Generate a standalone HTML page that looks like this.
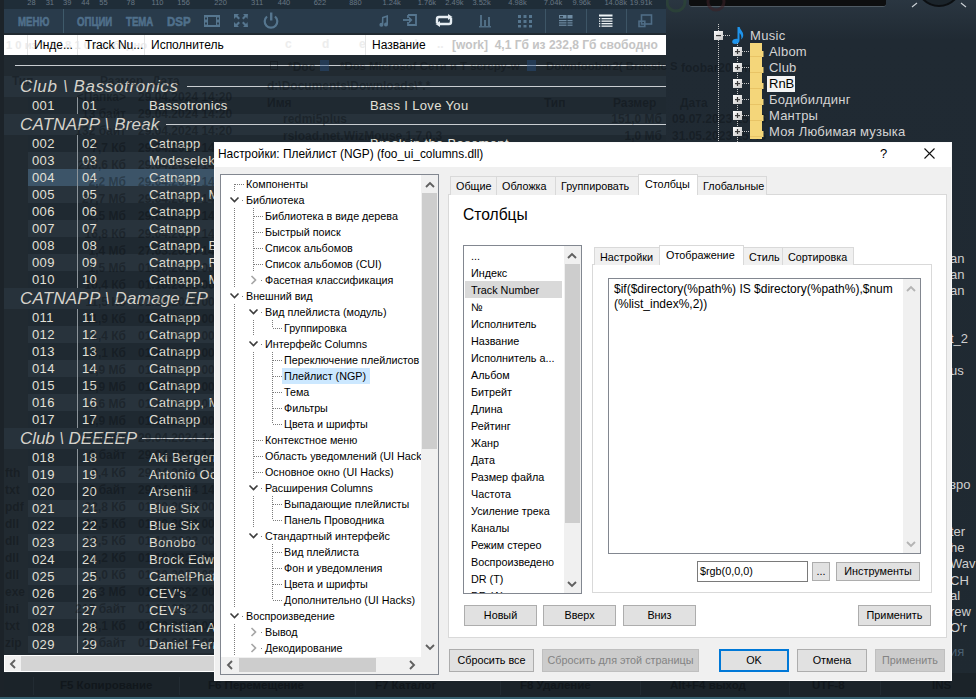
<!DOCTYPE html><html><head><meta charset="utf-8"><style>
*{box-sizing:border-box}
body{margin:0;width:976px;height:699px;overflow:hidden;background:#212a31;position:relative;font-family:"Liberation Sans",sans-serif}
.ab{position:absolute}
.t{position:absolute;white-space:pre;line-height:1}
.pl{font-size:13px;letter-spacing:0.35px;color:#e2e0d8}
.gh{font-size:17px;font-style:italic;color:#d6d3cb}
.dlg{font-size:10.8px;color:#000}
.btn{position:absolute;background:#e1e1e1;border:1px solid #adadad;font-size:10.8px;text-align:center;color:#000}
.tri{font-size:10.75px;color:#000}
</style></head><body>

<div class="ab" style="left:0;top:0;width:4px;height:699px;background:#1c2329"></div>
<div class="ab" style="left:4px;top:0;width:662px;height:9px;background:#1f2d38"></div>
<div class="t" style="left:1.3999999999999986px;width:60px;text-align:center;top:-1px;font-size:7.5px;color:#687784">28</div>
<div class="t" style="left:19.799999999999997px;width:60px;text-align:center;top:-1px;font-size:7.5px;color:#687784">31</div>
<div class="t" style="left:37.2px;width:60px;text-align:center;top:-1px;font-size:7.5px;color:#687784">39</div>
<div class="t" style="left:55.400000000000006px;width:60px;text-align:center;top:-1px;font-size:7.5px;color:#687784">44</div>
<div class="t" style="left:73.5px;width:60px;text-align:center;top:-1px;font-size:7.5px;color:#687784">55</div>
<div class="t" style="left:100.69999999999999px;width:60px;text-align:center;top:-1px;font-size:7.5px;color:#687784">78</div>
<div class="t" style="left:127.5px;width:60px;text-align:center;top:-1px;font-size:7.5px;color:#687784">110</div>
<div class="t" style="left:153.6px;width:60px;text-align:center;top:-1px;font-size:7.5px;color:#687784">156</div>
<div class="t" style="left:190.6px;width:60px;text-align:center;top:-1px;font-size:7.5px;color:#687784">220</div>
<div class="t" style="left:227.10000000000002px;width:60px;text-align:center;top:-1px;font-size:7.5px;color:#687784">311</div>
<div class="t" style="left:254px;width:60px;text-align:center;top:-1px;font-size:7.5px;color:#687784">440</div>
<div class="t" style="left:289.9px;width:60px;text-align:center;top:-1px;font-size:7.5px;color:#687784">622</div>
<div class="t" style="left:325.4px;width:60px;text-align:center;top:-1px;font-size:7.5px;color:#687784">880</div>
<div class="t" style="left:361.7px;width:60px;text-align:center;top:-1px;font-size:7.5px;color:#687784">1.24k</div>
<div class="t" style="left:396.9px;width:60px;text-align:center;top:-1px;font-size:7.5px;color:#687784">1.76k</div>
<div class="t" style="left:424.4px;width:60px;text-align:center;top:-1px;font-size:7.5px;color:#687784">2.49k</div>
<div class="t" style="left:451.6px;width:60px;text-align:center;top:-1px;font-size:7.5px;color:#687784">3.52k</div>
<div class="t" style="left:487.5px;width:60px;text-align:center;top:-1px;font-size:7.5px;color:#687784">4.98k</div>
<div class="t" style="left:523px;width:60px;text-align:center;top:-1px;font-size:7.5px;color:#687784">7.04k</div>
<div class="t" style="left:551.6px;width:60px;text-align:center;top:-1px;font-size:7.5px;color:#687784">9.96k</div>
<div class="t" style="left:585.7px;width:60px;text-align:center;top:-1px;font-size:7.5px;color:#687784">14.08k</div>
<div class="t" style="left:611.1px;width:60px;text-align:center;top:-1px;font-size:7.5px;color:#687784">19.91k</div>
<div class="ab" style="left:4px;top:9px;width:662px;height:24px;background:#293b4b"></div>
<div class="ab" style="left:63px;top:9px;width:1px;height:24px;background:#3f5a6a"></div>
<div class="t" style="left:18px;top:15px;font-size:13px;font-weight:bold;color:#50708b;-webkit-text-stroke:0.6px #50708b;transform-origin:0 0;transform:scaleX(0.74)">МЕНЮ</div>
<div class="t" style="left:77px;top:15px;font-size:13px;font-weight:bold;color:#50708b;-webkit-text-stroke:0.6px #50708b;transform-origin:0 0;transform:scaleX(0.74)">ОПЦИИ</div>
<div class="t" style="left:126px;top:15px;font-size:13px;font-weight:bold;color:#50708b;-webkit-text-stroke:0.6px #50708b;transform-origin:0 0;transform:scaleX(0.74)">ТЕМА</div>
<div class="t" style="left:167px;top:15px;font-size:13px;font-weight:bold;color:#50708b;-webkit-text-stroke:0.6px #50708b;transform-origin:0 0;transform:scaleX(0.88)">DSP</div>
<svg class="ab" style="left:0;top:0" width="666" height="34">
<g fill="none" stroke="#56768f" stroke-width="2">
<rect x="205" y="16" width="14" height="10"/>
</g>
<g fill="#56768f">
<rect x="204" y="15" width="4" height="12"/><rect x="216" y="15" width="4" height="12"/>
</g>
<g fill="#2a3c4c"><rect x="205" y="17.5" width="2" height="2"/><rect x="205" y="22.5" width="2" height="2"/><rect x="217" y="17.5" width="2" height="2"/><rect x="217" y="22.5" width="2" height="2"/></g>
<g fill="#56768f">
<path d="M234 14h5l-1.5 1.5 2.5 2.5-1.5 1.5-2.5-2.5-2 2z"/>
<path d="M248 14h-5l1.5 1.5-2.5 2.5 1.5 1.5 2.5-2.5 1.5 2z"/>
<path d="M234 27h5l-1.5-1.5 2.5-2.5-1.5-1.5-2.5 2.5-2-2z"/>
<path d="M248 27h-5l1.5-1.5-2.5-2.5 1.5-1.5 2.5 2.5 1.5-2z"/>
</g>
<path d="M267 16.5a6.3 6.3 0 1 0 8 0" fill="none" stroke="#56768f" stroke-width="2.2"/>
<rect x="270" y="12.5" width="2.4" height="8" fill="#56768f"/>
<g fill="#56768f">
<path d="M382 17l6-2v9.5a2 2 0 1 1-1.6-1.9v-5.3l-3 1v6.5a2 2 0 1 1-1.6-1.9z"/>
</g>
<g fill="none" stroke="#56768f" stroke-width="1.8">
<path d="M408 15h8v10h-8v-3"/><path d="M408 18v-3"/>
</g>
<path d="M403 20h7" stroke="#56768f" stroke-width="1.8"/><path d="M409 16.5l3.5 3.5-3.5 3.5z" fill="#56768f"/>
<g fill="none" stroke="#e6edf2" stroke-width="2.4">
<path d="M437 23v-4a2 2 0 0 1 2-2h10"/><path d="M451 18v4a2 2 0 0 1-2 2h-10"/>
</g>
<path d="M448 14l4.5 3-4.5 3z" fill="#e6edf2"/><path d="M440 21l-4.5 3 4.5 3z" fill="#e6edf2"/>
<g fill="#56768f" opacity="0.85">
<rect x="480" y="15" width="2" height="12"/><rect x="484" y="20" width="2" height="7"/><rect x="488" y="17" width="2" height="10"/><rect x="479" y="26" width="12" height="1.5"/>
</g>
<g fill="#56768f">
<rect x="518" y="15" width="3" height="3"/><rect x="523.5" y="15" width="3" height="3"/><rect x="529" y="15" width="3" height="3"/>
<rect x="518" y="20" width="3" height="3"/><rect x="523.5" y="20" width="3" height="3"/><rect x="529" y="20" width="3" height="3"/>
<rect x="518" y="25" width="3" height="2.5"/><rect x="523.5" y="25" width="3" height="2.5"/><rect x="529" y="25" width="3" height="2.5"/>
</g>
<g fill="#6f8ca3">
<rect x="559" y="15" width="7.5" height="3.5"/><rect x="567.5" y="15" width="5" height="3.5"/>
<rect x="559" y="20" width="7.5" height="1.2"/><rect x="567.5" y="20" width="5" height="1.2"/>
<rect x="559" y="22.3" width="7.5" height="1.2"/><rect x="567.5" y="22.3" width="5" height="1.2"/>
<rect x="559" y="24.6" width="7.5" height="1.2"/><rect x="567.5" y="24.6" width="5" height="1.2"/>
</g>
<rect x="560" y="16" width="3" height="1.5" fill="#2a3c4c"/>
<g fill="#eef3f6">
<rect x="599" y="14.5" width="13.5" height="2"/>
<rect x="599" y="18" width="1.3" height="1.3"/><rect x="601.5" y="18" width="11" height="1.3"/>
<rect x="599" y="20.5" width="1.3" height="1.3"/><rect x="601.5" y="20.5" width="11" height="1.3"/>
<rect x="599" y="23" width="1.3" height="1.3"/><rect x="601.5" y="23" width="11" height="1.3"/>
<rect x="599" y="25.5" width="1.3" height="1.3"/><rect x="601.5" y="25.5" width="11" height="1.3"/>
</g>
<g fill="none" stroke="#4f6d86" stroke-width="1.6">
<rect x="641.5" y="15" width="10" height="9"/><rect x="639" y="21.2" width="5.8" height="5.3"/>
</g>
<g fill="#3d5566"><rect x="545" y="9" width="1" height="24"/><rect x="586" y="9" width="1" height="24"/><rect x="626" y="9" width="1" height="24"/></g>
</svg>
<div class="ab" style="left:666px;top:0;width:310px;height:699px;background:linear-gradient(#2a3641 0px,#202a33 40px,#1f2931 100%)"></div>
<div class="ab" style="left:689px;top:0;width:197px;height:7px;background:#0d0e0f;border-bottom:1px solid #4f5a63;border-radius:0 0 3px 3px"></div>
<svg class="ab" style="left:900px;top:0" width="76" height="20"><circle cx="39" cy="-16" r="22" fill="#1b242b" stroke="#0c0f12" stroke-width="2"/><path d="M17 3l-5 4M61 3l5 4" stroke="#c9cfd4" stroke-width="1.2"/></svg>
<svg class="ab" style="left:666px;top:0" width="60" height="20"><circle cx="10" cy="2" r="9" fill="none" stroke="#2d4a36" stroke-width="3" opacity="0.6"/><circle cx="50" cy="2" r="8" fill="none" stroke="#3a2226" stroke-width="3" opacity="0.6"/></svg>
<div class="ab" style="left:4px;top:35px;width:662px;height:20px;background:#fff"></div>
<div class="t" style="left:452px;top:39px;font-size:12px;font-weight:bold;color:#c4c4c4">[work]  4,1 Гб из 232,8 Гб свободно</div>
<div class="t" style="left:6px;top:40px;font-size:11.2px;font-weight:bold;color:#ebebeb">1 0 из 1 3 / 8 1 0 свободно</div>
<div class="t" style="left:285px;top:38px;font-size:12px;font-weight:bold;color:#ededed">c</div>
<div class="t" style="left:322px;top:38px;font-size:12px;font-weight:bold;color:#ededed">d</div>
<div class="t" style="left:359px;top:38px;font-size:12px;font-weight:bold;color:#ededed">e</div>
<div class="t" style="left:400px;top:38px;font-size:12px;font-weight:bold;color:#ededed">\</div>
<div class="t" style="left:415px;top:38px;font-size:12px;font-weight:bold;color:#ededed">\</div>
<div class="t" style="left:437px;top:38px;font-size:12px;font-weight:bold;color:#ededed">..</div>
<div class="ab" style="left:27px;top:35px;width:1px;height:20px;background:#e5e5e5"></div>
<div class="ab" style="left:77px;top:35px;width:1px;height:20px;background:#e5e5e5"></div>
<div class="ab" style="left:144px;top:35px;width:1px;height:20px;background:#e5e5e5"></div>
<div class="ab" style="left:365px;top:35px;width:1px;height:20px;background:#e5e5e5"></div>
<div class="t" style="left:34px;top:39px;font-size:12px;color:#000">Инде...</div>
<div class="t" style="left:85px;top:39px;font-size:12px;color:#000">Track Nu...</div>
<div class="t" style="left:151px;top:39px;font-size:12px;color:#000">Исполнитель</div>
<div class="t" style="left:372px;top:39px;font-size:12px;color:#000">Название</div>
<div class="ab" style="left:15px;top:65px;width:651px;height:1px;background:#c9cdd1"></div>
<div class="ab" style="left:4px;top:76px;width:662px;height:21px;background:#27323b"></div>
<div class="t gh" style="left:20px;top:78px;letter-spacing:0.64px">Club \ Bassotronics</div>
<div class="ab" style="left:187px;top:86px;width:479px;height:1px;background:#c9cdd1"></div>
<div class="ab" style="left:28px;top:97px;width:638px;height:17px;background:#1f2931"></div>
<div class="ab" style="left:77px;top:97px;width:1px;height:17px;background:#8b9399"></div>
<div class="t pl" style="left:32px;top:99px">001</div>
<div class="t pl" style="left:82px;top:99px">01</div>
<div class="t pl" style="left:149px;top:99px">Bassotronics</div>
<div class="t pl" style="left:370px;top:99px">Bass I Love You</div>
<div class="ab" style="left:4px;top:114px;width:662px;height:21px;background:#27323b"></div>
<div class="t gh" style="left:20px;top:116px;letter-spacing:0.17px">CATNAPP \ Break</div>
<div class="ab" style="left:166px;top:124px;width:500px;height:1px;background:#c9cdd1"></div>
<div class="ab" style="left:28px;top:135px;width:638px;height:17px;background:#1f2931"></div>
<div class="ab" style="left:77px;top:135px;width:1px;height:17px;background:#8b9399"></div>
<div class="t pl" style="left:32px;top:137px">002</div>
<div class="t pl" style="left:82px;top:137px">02</div>
<div class="t pl" style="left:149px;top:137px">Catnapp</div>
<div class="t pl" style="left:370px;top:137px">Break in the Basement</div>
<div class="ab" style="left:28px;top:152px;width:638px;height:17px;background:#28333c"></div>
<div class="ab" style="left:77px;top:152px;width:1px;height:17px;background:#8b9399"></div>
<div class="t pl" style="left:32px;top:154px">003</div>
<div class="t pl" style="left:82px;top:154px">03</div>
<div class="t pl" style="left:149px;top:154px">Modeselektor</div>
<div class="ab" style="left:28px;top:169px;width:638px;height:17px;background:#3c5468"></div>
<div class="ab" style="left:77px;top:169px;width:1px;height:17px;background:#8b9399"></div>
<div class="t pl" style="left:32px;top:171px">004</div>
<div class="t pl" style="left:82px;top:171px">04</div>
<div class="t pl" style="left:149px;top:171px">Catnapp</div>
<div class="ab" style="left:28px;top:186px;width:638px;height:17px;background:#28333c"></div>
<div class="ab" style="left:77px;top:186px;width:1px;height:17px;background:#8b9399"></div>
<div class="t pl" style="left:32px;top:188px">005</div>
<div class="t pl" style="left:82px;top:188px">05</div>
<div class="t pl" style="left:149px;top:188px">Catnapp, M</div>
<div class="ab" style="left:28px;top:203px;width:638px;height:17px;background:#1f2931"></div>
<div class="ab" style="left:77px;top:203px;width:1px;height:17px;background:#8b9399"></div>
<div class="t pl" style="left:32px;top:205px">006</div>
<div class="t pl" style="left:82px;top:205px">06</div>
<div class="t pl" style="left:149px;top:205px">Catnapp</div>
<div class="ab" style="left:28px;top:220px;width:638px;height:17px;background:#28333c"></div>
<div class="ab" style="left:77px;top:220px;width:1px;height:17px;background:#8b9399"></div>
<div class="t pl" style="left:32px;top:222px">007</div>
<div class="t pl" style="left:82px;top:222px">07</div>
<div class="t pl" style="left:149px;top:222px">Catnapp</div>
<div class="ab" style="left:28px;top:237px;width:638px;height:17px;background:#1f2931"></div>
<div class="ab" style="left:77px;top:237px;width:1px;height:17px;background:#8b9399"></div>
<div class="t pl" style="left:32px;top:239px">008</div>
<div class="t pl" style="left:82px;top:239px">08</div>
<div class="t pl" style="left:149px;top:239px">Catnapp, B</div>
<div class="ab" style="left:28px;top:254px;width:638px;height:17px;background:#28333c"></div>
<div class="ab" style="left:77px;top:254px;width:1px;height:17px;background:#8b9399"></div>
<div class="t pl" style="left:32px;top:256px">009</div>
<div class="t pl" style="left:82px;top:256px">09</div>
<div class="t pl" style="left:149px;top:256px">Catnapp, R</div>
<div class="ab" style="left:28px;top:271px;width:638px;height:17px;background:#1f2931"></div>
<div class="ab" style="left:77px;top:271px;width:1px;height:17px;background:#8b9399"></div>
<div class="t pl" style="left:32px;top:273px">010</div>
<div class="t pl" style="left:82px;top:273px">10</div>
<div class="t pl" style="left:149px;top:273px">Catnapp, M</div>
<div class="ab" style="left:4px;top:288px;width:662px;height:21px;background:#27323b"></div>
<div class="t gh" style="left:20px;top:290px;letter-spacing:0.2px">CATNAPP \ Damage EP</div>
<div class="ab" style="left:216px;top:298px;width:450px;height:1px;background:#c9cdd1"></div>
<div class="ab" style="left:28px;top:309px;width:638px;height:17px;background:#1f2931"></div>
<div class="ab" style="left:77px;top:309px;width:1px;height:17px;background:#8b9399"></div>
<div class="t pl" style="left:32px;top:311px">011</div>
<div class="t pl" style="left:82px;top:311px">11</div>
<div class="t pl" style="left:149px;top:311px">Catnapp</div>
<div class="ab" style="left:28px;top:326px;width:638px;height:17px;background:#28333c"></div>
<div class="ab" style="left:77px;top:326px;width:1px;height:17px;background:#8b9399"></div>
<div class="t pl" style="left:32px;top:328px">012</div>
<div class="t pl" style="left:82px;top:328px">12</div>
<div class="t pl" style="left:149px;top:328px">Catnapp</div>
<div class="ab" style="left:28px;top:343px;width:638px;height:17px;background:#1f2931"></div>
<div class="ab" style="left:77px;top:343px;width:1px;height:17px;background:#8b9399"></div>
<div class="t pl" style="left:32px;top:345px">013</div>
<div class="t pl" style="left:82px;top:345px">13</div>
<div class="t pl" style="left:149px;top:345px">Catnapp</div>
<div class="ab" style="left:28px;top:360px;width:638px;height:17px;background:#28333c"></div>
<div class="ab" style="left:77px;top:360px;width:1px;height:17px;background:#8b9399"></div>
<div class="t pl" style="left:32px;top:362px">014</div>
<div class="t pl" style="left:82px;top:362px">14</div>
<div class="t pl" style="left:149px;top:362px">Catnapp</div>
<div class="ab" style="left:28px;top:377px;width:638px;height:17px;background:#1f2931"></div>
<div class="ab" style="left:77px;top:377px;width:1px;height:17px;background:#8b9399"></div>
<div class="t pl" style="left:32px;top:379px">015</div>
<div class="t pl" style="left:82px;top:379px">15</div>
<div class="t pl" style="left:149px;top:379px">Catnapp</div>
<div class="ab" style="left:28px;top:394px;width:638px;height:17px;background:#28333c"></div>
<div class="ab" style="left:77px;top:394px;width:1px;height:17px;background:#8b9399"></div>
<div class="t pl" style="left:32px;top:396px">016</div>
<div class="t pl" style="left:82px;top:396px">16</div>
<div class="t pl" style="left:149px;top:396px">Catnapp, M</div>
<div class="ab" style="left:28px;top:411px;width:638px;height:17px;background:#1f2931"></div>
<div class="ab" style="left:77px;top:411px;width:1px;height:17px;background:#8b9399"></div>
<div class="t pl" style="left:32px;top:413px">017</div>
<div class="t pl" style="left:82px;top:413px">17</div>
<div class="t pl" style="left:149px;top:413px">Catnapp</div>
<div class="ab" style="left:4px;top:428px;width:662px;height:21px;background:#27323b"></div>
<div class="t gh" style="left:20px;top:430px;letter-spacing:-0.08px">Club \ DEEEEP</div>
<div class="ab" style="left:142px;top:438px;width:524px;height:1px;background:#c9cdd1"></div>
<div class="ab" style="left:28px;top:449px;width:638px;height:17px;background:#1f2931"></div>
<div class="ab" style="left:77px;top:449px;width:1px;height:17px;background:#8b9399"></div>
<div class="t pl" style="left:32px;top:451px">018</div>
<div class="t pl" style="left:82px;top:451px">18</div>
<div class="t pl" style="left:149px;top:451px">Aki Bergen</div>
<div class="ab" style="left:28px;top:466px;width:638px;height:17px;background:#28333c"></div>
<div class="ab" style="left:77px;top:466px;width:1px;height:17px;background:#8b9399"></div>
<div class="t pl" style="left:32px;top:468px">019</div>
<div class="t pl" style="left:82px;top:468px">19</div>
<div class="t pl" style="left:149px;top:468px">Antonio Ocasio</div>
<div class="ab" style="left:28px;top:483px;width:638px;height:17px;background:#1f2931"></div>
<div class="ab" style="left:77px;top:483px;width:1px;height:17px;background:#8b9399"></div>
<div class="t pl" style="left:32px;top:485px">020</div>
<div class="t pl" style="left:82px;top:485px">20</div>
<div class="t pl" style="left:149px;top:485px">Arsenii</div>
<div class="ab" style="left:28px;top:500px;width:638px;height:17px;background:#28333c"></div>
<div class="ab" style="left:77px;top:500px;width:1px;height:17px;background:#8b9399"></div>
<div class="t pl" style="left:32px;top:502px">021</div>
<div class="t pl" style="left:82px;top:502px">21</div>
<div class="t pl" style="left:149px;top:502px">Blue Six</div>
<div class="ab" style="left:28px;top:517px;width:638px;height:17px;background:#1f2931"></div>
<div class="ab" style="left:77px;top:517px;width:1px;height:17px;background:#8b9399"></div>
<div class="t pl" style="left:32px;top:519px">022</div>
<div class="t pl" style="left:82px;top:519px">22</div>
<div class="t pl" style="left:149px;top:519px">Blue Six</div>
<div class="ab" style="left:28px;top:534px;width:638px;height:17px;background:#28333c"></div>
<div class="ab" style="left:77px;top:534px;width:1px;height:17px;background:#8b9399"></div>
<div class="t pl" style="left:32px;top:536px">023</div>
<div class="t pl" style="left:82px;top:536px">23</div>
<div class="t pl" style="left:149px;top:536px">Bonobo</div>
<div class="ab" style="left:28px;top:551px;width:638px;height:17px;background:#1f2931"></div>
<div class="ab" style="left:77px;top:551px;width:1px;height:17px;background:#8b9399"></div>
<div class="t pl" style="left:32px;top:553px">024</div>
<div class="t pl" style="left:82px;top:553px">24</div>
<div class="t pl" style="left:149px;top:553px">Brock Edwards</div>
<div class="ab" style="left:28px;top:568px;width:638px;height:17px;background:#28333c"></div>
<div class="ab" style="left:77px;top:568px;width:1px;height:17px;background:#8b9399"></div>
<div class="t pl" style="left:32px;top:570px">025</div>
<div class="t pl" style="left:82px;top:570px">25</div>
<div class="t pl" style="left:149px;top:570px">CamelPhat</div>
<div class="ab" style="left:28px;top:585px;width:638px;height:17px;background:#1f2931"></div>
<div class="ab" style="left:77px;top:585px;width:1px;height:17px;background:#8b9399"></div>
<div class="t pl" style="left:32px;top:587px">026</div>
<div class="t pl" style="left:82px;top:587px">26</div>
<div class="t pl" style="left:149px;top:587px">CEV's</div>
<div class="ab" style="left:28px;top:602px;width:638px;height:17px;background:#28333c"></div>
<div class="ab" style="left:77px;top:602px;width:1px;height:17px;background:#8b9399"></div>
<div class="t pl" style="left:32px;top:604px">027</div>
<div class="t pl" style="left:82px;top:604px">27</div>
<div class="t pl" style="left:149px;top:604px">CEV's</div>
<div class="ab" style="left:28px;top:619px;width:638px;height:17px;background:#1f2931"></div>
<div class="ab" style="left:77px;top:619px;width:1px;height:17px;background:#8b9399"></div>
<div class="t pl" style="left:32px;top:621px">028</div>
<div class="t pl" style="left:82px;top:621px">28</div>
<div class="t pl" style="left:149px;top:621px">Christian Anders</div>
<div class="ab" style="left:28px;top:636px;width:638px;height:17px;background:#28333c"></div>
<div class="ab" style="left:77px;top:636px;width:1px;height:17px;background:#8b9399"></div>
<div class="t pl" style="left:32px;top:638px">029</div>
<div class="t pl" style="left:82px;top:638px">29</div>
<div class="t pl" style="left:149px;top:638px">Daniel Ferreira</div>
<div class="ab" style="left:4px;top:655px;width:662px;height:17px;background:#d4d4d4;border:1px solid #fff"></div>
<div class="ab" style="left:5px;top:656px;width:16px;height:15px;background:#f0f0f0"></div>
<div class="ab" style="left:0;top:697px;width:976px;height:2px;background:#35606f"></div>
<div class="t" style="left:46px;width:80px;text-align:right;top:91.0px;font-size:12px;font-weight:bold;color:rgba(5,8,10,0.33)">&lt;Папка&gt;</div>
<div class="t" style="left:138px;top:91.0px;font-size:12px;font-weight:bold;color:rgba(5,8,10,0.33)">29.04.2024 14:20</div>
<div class="t" style="left:46px;width:80px;text-align:right;top:108.07px;font-size:12px;font-weight:bold;color:rgba(5,8,10,0.33)">13 байт</div>
<div class="t" style="left:138px;top:108.07px;font-size:12px;font-weight:bold;color:rgba(5,8,10,0.33)">29.04.2024 14:20</div>
<div class="t" style="left:46px;width:80px;text-align:right;top:125.13999999999999px;font-size:12px;font-weight:bold;color:rgba(5,8,10,0.33)">132 байт</div>
<div class="t" style="left:138px;top:125.13999999999999px;font-size:12px;font-weight:bold;color:rgba(5,8,10,0.33)">29.04.2024 14:20</div>
<div class="t" style="left:46px;width:80px;text-align:right;top:142.21px;font-size:12px;font-weight:bold;color:rgba(5,8,10,0.33)">7,7 Кб</div>
<div class="t" style="left:138px;top:142.21px;font-size:12px;font-weight:bold;color:rgba(5,8,10,0.33)">29.04.2024 14:20</div>
<div class="t" style="left:46px;width:80px;text-align:right;top:159.28px;font-size:12px;font-weight:bold;color:rgba(5,8,10,0.33)">216,6 Кб</div>
<div class="t" style="left:138px;top:159.28px;font-size:12px;font-weight:bold;color:rgba(5,8,10,0.33)">29.04.2024 14:20</div>
<div class="t" style="left:46px;width:80px;text-align:right;top:176.35px;font-size:12px;font-weight:bold;color:rgba(5,8,10,0.33)">2,2 Мб</div>
<div class="t" style="left:138px;top:176.35px;font-size:12px;font-weight:bold;color:rgba(5,8,10,0.33)">29.04.2024 14:20</div>
<div class="t" style="left:46px;width:80px;text-align:right;top:193.42000000000002px;font-size:12px;font-weight:bold;color:rgba(5,8,10,0.33)">27,7 Мб</div>
<div class="t" style="left:138px;top:193.42000000000002px;font-size:12px;font-weight:bold;color:rgba(5,8,10,0.33)">29.04.2024 14:20</div>
<div class="t" style="left:46px;width:80px;text-align:right;top:210.49px;font-size:12px;font-weight:bold;color:rgba(5,8,10,0.33)">2,5 Мб</div>
<div class="t" style="left:138px;top:210.49px;font-size:12px;font-weight:bold;color:rgba(5,8,10,0.33)">29.04.2024 14:20</div>
<div class="t" style="left:46px;width:80px;text-align:right;top:227.56px;font-size:12px;font-weight:bold;color:rgba(5,8,10,0.33)">16,8 Кб</div>
<div class="t" style="left:138px;top:227.56px;font-size:12px;font-weight:bold;color:rgba(5,8,10,0.33)">29.04.2024 14:20</div>
<div class="t" style="left:46px;width:80px;text-align:right;top:244.63px;font-size:12px;font-weight:bold;color:rgba(5,8,10,0.33)">1,4 Мб</div>
<div class="t" style="left:138px;top:244.63px;font-size:12px;font-weight:bold;color:rgba(5,8,10,0.33)">27.03.2024 14:20</div>
<div class="t" style="left:46px;width:80px;text-align:right;top:261.7px;font-size:12px;font-weight:bold;color:rgba(5,8,10,0.33)">1,5 Мб</div>
<div class="t" style="left:138px;top:261.7px;font-size:12px;font-weight:bold;color:rgba(5,8,10,0.33)">01.10.2022 00:00</div>
<div class="t" style="left:46px;width:80px;text-align:right;top:278.77px;font-size:12px;font-weight:bold;color:rgba(5,8,10,0.33)">10,4 Кб</div>
<div class="t" style="left:138px;top:278.77px;font-size:12px;font-weight:bold;color:rgba(5,8,10,0.33)">01.10.2022 00:00</div>
<div class="t" style="left:46px;width:80px;text-align:right;top:295.84000000000003px;font-size:12px;font-weight:bold;color:rgba(5,8,10,0.33)">11,5 Кб</div>
<div class="t" style="left:138px;top:295.84000000000003px;font-size:12px;font-weight:bold;color:rgba(5,8,10,0.33)">01.10.2022 00:00</div>
<div class="t" style="left:46px;width:80px;text-align:right;top:312.90999999999997px;font-size:12px;font-weight:bold;color:rgba(5,8,10,0.33)">11,9 Кб</div>
<div class="t" style="left:138px;top:312.90999999999997px;font-size:12px;font-weight:bold;color:rgba(5,8,10,0.33)">01.10.2022 00:00</div>
<div class="t" style="left:46px;width:80px;text-align:right;top:329.98px;font-size:12px;font-weight:bold;color:rgba(5,8,10,0.33)">1,4 Кб</div>
<div class="t" style="left:138px;top:329.98px;font-size:12px;font-weight:bold;color:rgba(5,8,10,0.33)">01.10.2022 00:00</div>
<div class="t" style="left:46px;width:80px;text-align:right;top:347.05px;font-size:12px;font-weight:bold;color:rgba(5,8,10,0.33)">4,1 Кб</div>
<div class="t" style="left:138px;top:347.05px;font-size:12px;font-weight:bold;color:rgba(5,8,10,0.33)">01.10.2022 00:00</div>
<div class="t" style="left:46px;width:80px;text-align:right;top:364.12px;font-size:12px;font-weight:bold;color:rgba(5,8,10,0.33)">3,9 Мб</div>
<div class="t" style="left:138px;top:364.12px;font-size:12px;font-weight:bold;color:rgba(5,8,10,0.33)">01.10.2022 00:00</div>
<div class="t" style="left:46px;width:80px;text-align:right;top:381.19px;font-size:12px;font-weight:bold;color:rgba(5,8,10,0.33)">2,9 Мб</div>
<div class="t" style="left:138px;top:381.19px;font-size:12px;font-weight:bold;color:rgba(5,8,10,0.33)">01.10.2022 00:00</div>
<div class="t" style="left:46px;width:80px;text-align:right;top:398.26px;font-size:12px;font-weight:bold;color:rgba(5,8,10,0.33)">2,6 Мб</div>
<div class="t" style="left:138px;top:398.26px;font-size:12px;font-weight:bold;color:rgba(5,8,10,0.33)">01.10.2022 00:00</div>
<div class="t" style="left:46px;width:80px;text-align:right;top:415.33px;font-size:12px;font-weight:bold;color:rgba(5,8,10,0.33)">8,9 Мб</div>
<div class="t" style="left:138px;top:415.33px;font-size:12px;font-weight:bold;color:rgba(5,8,10,0.33)">01.10.2022 00:00</div>
<div class="t" style="left:46px;width:80px;text-align:right;top:432.4px;font-size:12px;font-weight:bold;color:rgba(5,8,10,0.33)">13 байт</div>
<div class="t" style="left:138px;top:432.4px;font-size:12px;font-weight:bold;color:rgba(5,8,10,0.33)">29.04.2024 14:20</div>
<div class="t" style="left:46px;width:80px;text-align:right;top:449.47px;font-size:12px;font-weight:bold;color:rgba(5,8,10,0.33)">6 байт</div>
<div class="t" style="left:138px;top:449.47px;font-size:12px;font-weight:bold;color:rgba(5,8,10,0.33)">29.04.2024 14:20</div>
<div class="t" style="left:46px;width:80px;text-align:right;top:466.54px;font-size:12px;font-weight:bold;color:rgba(5,8,10,0.33)">9,4 Кб</div>
<div class="t" style="left:138px;top:466.54px;font-size:12px;font-weight:bold;color:rgba(5,8,10,0.33)">29.04.2024 14:20</div>
<div class="t" style="left:5px;top:466.54px;font-size:12px;font-weight:bold;color:rgba(5,8,10,0.33)">fth</div>
<div class="t" style="left:46px;width:80px;text-align:right;top:483.61px;font-size:12px;font-weight:bold;color:rgba(5,8,10,0.33)">6 байт</div>
<div class="t" style="left:138px;top:483.61px;font-size:12px;font-weight:bold;color:rgba(5,8,10,0.33)">29.04.2024 14:20</div>
<div class="t" style="left:5px;top:483.61px;font-size:12px;font-weight:bold;color:rgba(5,8,10,0.33)">txt</div>
<div class="t" style="left:46px;width:80px;text-align:right;top:500.68px;font-size:12px;font-weight:bold;color:rgba(5,8,10,0.33)">22,8 Кб</div>
<div class="t" style="left:138px;top:500.68px;font-size:12px;font-weight:bold;color:rgba(5,8,10,0.33)">01.10.2022 00:00</div>
<div class="t" style="left:5px;top:500.68px;font-size:12px;font-weight:bold;color:rgba(5,8,10,0.33)">pdf</div>
<div class="t" style="left:46px;width:80px;text-align:right;top:517.75px;font-size:12px;font-weight:bold;color:rgba(5,8,10,0.33)">10,5 Кб</div>
<div class="t" style="left:138px;top:517.75px;font-size:12px;font-weight:bold;color:rgba(5,8,10,0.33)">01.10.2022 00:00</div>
<div class="t" style="left:5px;top:517.75px;font-size:12px;font-weight:bold;color:rgba(5,8,10,0.33)">dll</div>
<div class="t" style="left:46px;width:80px;text-align:right;top:534.8199999999999px;font-size:12px;font-weight:bold;color:rgba(5,8,10,0.33)">10,5 Кб</div>
<div class="t" style="left:138px;top:534.8199999999999px;font-size:12px;font-weight:bold;color:rgba(5,8,10,0.33)">01.10.2022 00:00</div>
<div class="t" style="left:5px;top:534.8199999999999px;font-size:12px;font-weight:bold;color:rgba(5,8,10,0.33)">dll</div>
<div class="t" style="left:46px;width:80px;text-align:right;top:551.89px;font-size:12px;font-weight:bold;color:rgba(5,8,10,0.33)">11,2 Кб</div>
<div class="t" style="left:138px;top:551.89px;font-size:12px;font-weight:bold;color:rgba(5,8,10,0.33)">01.10.2022 00:00</div>
<div class="t" style="left:5px;top:551.89px;font-size:12px;font-weight:bold;color:rgba(5,8,10,0.33)">dll</div>
<div class="t" style="left:46px;width:80px;text-align:right;top:568.96px;font-size:12px;font-weight:bold;color:rgba(5,8,10,0.33)">3,0 Кб</div>
<div class="t" style="left:138px;top:568.96px;font-size:12px;font-weight:bold;color:rgba(5,8,10,0.33)">01.10.2022 00:00</div>
<div class="t" style="left:5px;top:568.96px;font-size:12px;font-weight:bold;color:rgba(5,8,10,0.33)">dll</div>
<div class="t" style="left:46px;width:80px;text-align:right;top:586.03px;font-size:12px;font-weight:bold;color:rgba(5,8,10,0.33)">1,3 Мб</div>
<div class="t" style="left:138px;top:586.03px;font-size:12px;font-weight:bold;color:rgba(5,8,10,0.33)">01.10.2022 00:00</div>
<div class="t" style="left:5px;top:586.03px;font-size:12px;font-weight:bold;color:rgba(5,8,10,0.33)">exe</div>
<div class="t" style="left:46px;width:80px;text-align:right;top:603.1px;font-size:12px;font-weight:bold;color:rgba(5,8,10,0.33)">217 байт</div>
<div class="t" style="left:138px;top:603.1px;font-size:12px;font-weight:bold;color:rgba(5,8,10,0.33)">01.10.2022 00:00</div>
<div class="t" style="left:5px;top:603.1px;font-size:12px;font-weight:bold;color:rgba(5,8,10,0.33)">ini</div>
<div class="t" style="left:46px;width:80px;text-align:right;top:620.17px;font-size:12px;font-weight:bold;color:rgba(5,8,10,0.33)">8,1 Кб</div>
<div class="t" style="left:138px;top:620.17px;font-size:12px;font-weight:bold;color:rgba(5,8,10,0.33)">01.10.2022 00:00</div>
<div class="t" style="left:5px;top:620.17px;font-size:12px;font-weight:bold;color:rgba(5,8,10,0.33)">txt</div>
<div class="t" style="left:46px;width:80px;text-align:right;top:637.24px;font-size:12px;font-weight:bold;color:rgba(5,8,10,0.33)">12 байт</div>
<div class="t" style="left:138px;top:637.24px;font-size:12px;font-weight:bold;color:rgba(5,8,10,0.33)">01.10.2022 00:00</div>
<div class="t" style="left:5px;top:637.24px;font-size:12px;font-weight:bold;color:rgba(5,8,10,0.33)">zip</div>
<div class="t" style="left:12px;top:75px;font-size:12px;font-weight:bold;color:rgba(5,8,10,0.33)">Тип</div>
<div class="t" style="left:100px;top:75px;font-size:12px;font-weight:bold;color:rgba(5,8,10,0.33)">Размер</div>
<div class="t" style="left:152px;top:75px;font-size:12px;font-weight:bold;color:rgba(5,8,10,0.33)">Дата</div>
<div class="t" style="left:288px;top:61px;font-size:12px;font-weight:bold;color:rgba(5,8,10,0.33)">*Doc</div>
<div class="t" style="left:340px;top:61px;font-size:11.4px;font-weight:bold;color:rgba(5,8,10,0.33)">*Dos Microsof Сети и Т scrcpy-w</div>
<div class="t" style="left:546px;top:61px;font-size:11.4px;font-weight:bold;color:rgba(5,8,10,0.33)">Downfoobar2( Brassic S</div>
<div class="ab" style="left:320px;top:60px;width:9px;height:11px;background:rgba(40,80,130,0.45)"></div><div class="ab" style="left:527px;top:60px;width:9px;height:11px;background:rgba(40,80,130,0.45)"></div><div class="ab" style="left:270px;top:61px;width:8px;height:9px;border:1px solid rgba(5,8,10,0.3)"></div>
<div class="t" style="left:267px;top:80px;font-size:12px;font-weight:bold;color:rgba(5,8,10,0.33)">d:\Documents\Downloads\*.*</div>
<div class="t" style="left:267px;top:97px;font-size:12px;font-weight:bold;color:rgba(5,8,10,0.33)">Имя</div>
<div class="t" style="left:544px;top:97px;font-size:12px;font-weight:bold;color:rgba(5,8,10,0.33)">Тип</div>
<div class="t" style="left:613px;top:97px;font-size:12px;font-weight:bold;color:rgba(5,8,10,0.33)">Размер</div>
<div class="t" style="left:283px;top:113px;font-size:12px;font-weight:bold;color:rgba(5,8,10,0.33)">redmi5plus</div>
<div class="t" style="left:582px;width:80px;text-align:right;top:113px;font-size:12px;font-weight:bold;color:rgba(5,8,10,0.33)">151,0 Мб</div>
<div class="t" style="left:283px;top:130px;font-size:12px;font-weight:bold;color:rgba(5,8,10,0.33)">rsload.net.WizMouse.1.7.0.3</div>
<div class="t" style="left:582px;width:80px;text-align:right;top:130px;font-size:12px;font-weight:bold;color:rgba(5,8,10,0.33)">1,0 Мб</div>
<div class="t" style="left:681px;top:62px;font-size:12px;font-weight:bold;color:rgba(5,8,10,0.33)">foobar20 wn</div>
<div class="t" style="left:680px;top:97px;font-size:12px;font-weight:bold;color:rgba(5,8,10,0.33)">Дата</div>
<div class="t" style="left:672px;top:113px;font-size:12px;font-weight:bold;color:rgba(5,8,10,0.33)">09.07.2023 15:46</div>
<div class="t" style="left:672px;top:130px;font-size:12px;font-weight:bold;color:rgba(5,8,10,0.33)">31.05.2023 15:46</div>
<svg class="ab" style="left:700px;top:20px" width="120" height="130" viewBox="700 20 120 130"><line x1="718.5" y1="24" x2="718.5" y2="150" stroke="#c8c8c8" stroke-dasharray="1 1" shape-rendering="crispEdges"/><line x1="723" y1="35.5" x2="730" y2="35.5" stroke="#c8c8c8" stroke-dasharray="1 1" shape-rendering="crispEdges"/><line x1="737.5" y1="43" x2="737.5" y2="150" stroke="#c8c8c8" stroke-dasharray="1 1" shape-rendering="crispEdges"/><defs><linearGradient id="bx" x1="0" y1="0" x2="1" y2="1"><stop offset="0" stop-color="#ffffff"/><stop offset="1" stop-color="#c4c4c4"/></linearGradient></defs><rect x="714" y="31" width="9" height="9" fill="url(#bx)"/><rect x="716" y="35" width="5" height="1.2" fill="#3a3a3a"/><path d="M737.5 27h2.2c0.3 3 4 4.5 3.5 9-0.3 2-1.5 3-2 3.5 0.8-3-0.5-5.5-1.7-6.5v7.5c0 2.2-2 3.5-4.3 3.5-2 0-3-1-3-2.3 0-2 2.5-3.2 5.3-2.8z" fill="#1e94ec"/><line x1="742" y1="51.5" x2="749" y2="51.5" stroke="#c8c8c8" stroke-dasharray="1 1" shape-rendering="crispEdges"/><rect x="733" y="47" width="9" height="9" fill="url(#bx)"/><rect x="735" y="51" width="5" height="1.2" fill="#3a3a3a"/><rect x="736.9" y="49" width="1.2" height="5" fill="#3a3a3a"/><rect x="750" y="43" width="12" height="16" fill="#f4d67a"/><rect x="762" y="51" width="1.5" height="6" fill="#f4d67a"/><rect x="750" y="56" width="12" height="1" fill="#e8c466"/><line x1="742" y1="67.5" x2="749" y2="67.5" stroke="#c8c8c8" stroke-dasharray="1 1" shape-rendering="crispEdges"/><rect x="733" y="63" width="9" height="9" fill="url(#bx)"/><rect x="735" y="67" width="5" height="1.2" fill="#3a3a3a"/><rect x="736.9" y="65" width="1.2" height="5" fill="#3a3a3a"/><rect x="750" y="59" width="12" height="16" fill="#f4d67a"/><rect x="762" y="67" width="1.5" height="6" fill="#f4d67a"/><rect x="750" y="72" width="12" height="1" fill="#e8c466"/><line x1="742" y1="83.5" x2="749" y2="83.5" stroke="#c8c8c8" stroke-dasharray="1 1" shape-rendering="crispEdges"/><rect x="733" y="79" width="9" height="9" fill="url(#bx)"/><rect x="735" y="83" width="5" height="1.2" fill="#3a3a3a"/><rect x="736.9" y="81" width="1.2" height="5" fill="#3a3a3a"/><rect x="750" y="75" width="12" height="16" fill="#f4d67a"/><rect x="762" y="83" width="1.5" height="6" fill="#f4d67a"/><rect x="750" y="88" width="12" height="1" fill="#e8c466"/><line x1="742" y1="99.5" x2="749" y2="99.5" stroke="#c8c8c8" stroke-dasharray="1 1" shape-rendering="crispEdges"/><rect x="733" y="95" width="9" height="9" fill="url(#bx)"/><rect x="735" y="99" width="5" height="1.2" fill="#3a3a3a"/><rect x="736.9" y="97" width="1.2" height="5" fill="#3a3a3a"/><rect x="750" y="91" width="12" height="16" fill="#f4d67a"/><rect x="762" y="99" width="1.5" height="6" fill="#f4d67a"/><rect x="750" y="104" width="12" height="1" fill="#e8c466"/><line x1="742" y1="115.5" x2="749" y2="115.5" stroke="#c8c8c8" stroke-dasharray="1 1" shape-rendering="crispEdges"/><rect x="733" y="111" width="9" height="9" fill="url(#bx)"/><rect x="735" y="115" width="5" height="1.2" fill="#3a3a3a"/><rect x="736.9" y="113" width="1.2" height="5" fill="#3a3a3a"/><rect x="750" y="107" width="12" height="16" fill="#f4d67a"/><rect x="762" y="115" width="1.5" height="6" fill="#f4d67a"/><rect x="750" y="120" width="12" height="1" fill="#e8c466"/><line x1="742" y1="131.5" x2="749" y2="131.5" stroke="#c8c8c8" stroke-dasharray="1 1" shape-rendering="crispEdges"/><rect x="733" y="127" width="9" height="9" fill="url(#bx)"/><rect x="735" y="131" width="5" height="1.2" fill="#3a3a3a"/><rect x="736.9" y="129" width="1.2" height="5" fill="#3a3a3a"/><rect x="750" y="123" width="12" height="16" fill="#f4d67a"/><rect x="762" y="131" width="1.5" height="6" fill="#f4d67a"/><rect x="750" y="136" width="12" height="1" fill="#e8c466"/></svg>
<div class="t" style="left:750px;top:29px;font-size:13px;color:#d4d4d4;letter-spacing:0.3px">Music</div>
<div class="t" style="left:769px;top:45px;font-size:13px;color:#d4d4d4;letter-spacing:0.2px">Albom</div>
<div class="t" style="left:769px;top:61px;font-size:13px;color:#d4d4d4;letter-spacing:0.2px">Club</div>
<div class="ab" style="left:767px;top:76px;width:28px;height:16px;background:#f4f4f4"></div>
<div class="t" style="left:769px;top:77px;font-size:13px;color:#000">RnB</div>
<div class="t" style="left:769px;top:93px;font-size:13px;color:#d4d4d4;letter-spacing:0.2px">Бодибилдинг</div>
<div class="t" style="left:769px;top:109px;font-size:13px;color:#d4d4d4;letter-spacing:0.2px">Мантры</div>
<div class="t" style="left:769px;top:125px;font-size:13px;color:#d4d4d4;letter-spacing:0.2px">Моя Любимая музыка</div>
<div class="t" style="left:950px;top:252px;font-size:13px;color:#cfcfcf">an</div>
<div class="t" style="left:950px;top:268px;font-size:13px;color:#cfcfcf">an</div>
<div class="t" style="left:950px;top:284px;font-size:13px;color:#cfcfcf">an</div>
<div class="t" style="left:950px;top:332px;font-size:13px;color:#cfcfcf">t_2</div>
<div class="t" style="left:950px;top:364px;font-size:13px;color:#cfcfcf">us</div>
<div class="t" style="left:950px;top:478px;font-size:13px;color:#cfcfcf">зро</div>
<div class="t" style="left:950px;top:525px;font-size:13px;color:#cfcfcf">ter</div>
<div class="t" style="left:950px;top:541px;font-size:13px;color:#cfcfcf">he</div>
<div class="t" style="left:950px;top:557px;font-size:13px;color:#cfcfcf">Wav</div>
<div class="t" style="left:950px;top:574px;font-size:13px;color:#cfcfcf">CH</div>
<div class="t" style="left:950px;top:589px;font-size:13px;color:#cfcfcf">al</div>
<div class="t" style="left:950px;top:605px;font-size:13px;color:#cfcfcf">rew</div>
<div class="t" style="left:950px;top:621px;font-size:13px;color:#cfcfcf">O'r</div>
<div class="t" style="left:950px;top:645px;font-size:13px;color:#4a6073">ия</div>
<div class="ab" style="left:4px;top:673px;width:972px;height:24px;background:#1b2329"></div>
<div class="ab" style="left:33px;top:677px;width:1px;height:18px;background:#222b32"></div>
<div class="ab" style="left:179px;top:677px;width:1px;height:18px;background:#222b32"></div>
<div class="ab" style="left:355px;top:677px;width:1px;height:18px;background:#222b32"></div>
<div class="ab" style="left:500px;top:677px;width:1px;height:18px;background:#222b32"></div>
<div class="ab" style="left:640px;top:677px;width:1px;height:18px;background:#222b32"></div>
<div class="ab" style="left:789px;top:677px;width:1px;height:18px;background:#222b32"></div>
<div class="ab" style="left:880px;top:677px;width:1px;height:18px;background:#222b32"></div>
<div class="t" style="left:60px;top:680px;font-size:11.5px;font-weight:bold;color:#11171c">F5 Копирование</div>
<div class="t" style="left:208px;top:680px;font-size:11.5px;font-weight:bold;color:#11171c">F6 Перемещение</div>
<div class="t" style="left:375px;top:680px;font-size:11.5px;font-weight:bold;color:#11171c">F7 Каталог</div>
<div class="t" style="left:520px;top:680px;font-size:11.5px;font-weight:bold;color:#11171c">F8 Удаление</div>
<div class="t" style="left:670px;top:680px;font-size:11.5px;font-weight:bold;color:#11171c">Alt+F4 выход</div>
<div class="t" style="left:812px;top:680px;font-size:11.5px;font-weight:bold;color:#11171c">UTF-8</div>
<div class="t" style="left:932px;top:680px;font-size:11.5px;font-weight:bold;color:#11171c">INS</div>
<div class="ab" style="left:214px;top:142px;width:738px;height:539px;background:#f0f0f0;border:1px solid #fafafa"></div>
<div class="ab" style="left:215px;top:143px;width:736px;height:24px;background:#fff"></div>
<div class="t" style="left:218px;top:149px;font-size:11.9px;color:#000">Настройки: Плейлист (NGP) (foo_ui_columns.dll)</div>
<div class="t" style="left:880px;top:147px;font-size:13px;color:#000">?</div>
<svg class="ab" style="left:920px;top:146px" width="20" height="16"><path d="M4.5 2.5l10 10M14.5 2.5l-10 10" stroke="#111" stroke-width="1.1"/></svg>
<div class="ab" style="left:220px;top:174px;width:219px;height:501px;background:#fff;border:1px solid #828790"></div>
<div class="ab" style="left:221px;top:175px;width:200px;height:481px;overflow:hidden">
<svg class="ab" style="left:0;top:0" width="200" height="481" viewBox="221 175 200 481"><line x1="234.5" y1="184" x2="234.5" y2="200" stroke="#7c7c7c" stroke-dasharray="1 1" shape-rendering="crispEdges"/><line x1="234.5" y1="184.5" x2="244" y2="184.5" stroke="#7c7c7c" stroke-dasharray="1 1" shape-rendering="crispEdges"/><line x1="234.5" y1="200" x2="234.5" y2="296" stroke="#7c7c7c" stroke-dasharray="1 1" shape-rendering="crispEdges"/><rect x="228.5" y="192" width="12" height="16" fill="#fff"/><rect x="242" y="200" width="1" height="1" fill="#7c7c7c"/><polyline points="230.5,197.5 234.5,201.5 238.5,197.5" fill="none" stroke="#3c3c3c" stroke-width="1.6"/><line x1="253.5" y1="216" x2="253.5" y2="232" stroke="#7c7c7c" stroke-dasharray="1 1" shape-rendering="crispEdges"/><line x1="253.5" y1="208" x2="253.5" y2="216" stroke="#7c7c7c" stroke-dasharray="1 1" shape-rendering="crispEdges"/><line x1="253.5" y1="216.5" x2="263" y2="216.5" stroke="#7c7c7c" stroke-dasharray="1 1" shape-rendering="crispEdges"/><line x1="253.5" y1="232" x2="253.5" y2="248" stroke="#7c7c7c" stroke-dasharray="1 1" shape-rendering="crispEdges"/><line x1="253.5" y1="232.5" x2="263" y2="232.5" stroke="#7c7c7c" stroke-dasharray="1 1" shape-rendering="crispEdges"/><line x1="253.5" y1="248" x2="253.5" y2="264" stroke="#7c7c7c" stroke-dasharray="1 1" shape-rendering="crispEdges"/><line x1="253.5" y1="248.5" x2="263" y2="248.5" stroke="#7c7c7c" stroke-dasharray="1 1" shape-rendering="crispEdges"/><line x1="253.5" y1="264" x2="253.5" y2="280" stroke="#7c7c7c" stroke-dasharray="1 1" shape-rendering="crispEdges"/><line x1="253.5" y1="264.5" x2="263" y2="264.5" stroke="#7c7c7c" stroke-dasharray="1 1" shape-rendering="crispEdges"/><rect x="247.5" y="272" width="12" height="16" fill="#fff"/><rect x="261" y="280" width="1" height="1" fill="#7c7c7c"/><polyline points="251.5,276 255.5,280 251.5,284" fill="none" stroke="#a6a6a6" stroke-width="1.6"/><line x1="234.5" y1="296" x2="234.5" y2="616" stroke="#7c7c7c" stroke-dasharray="1 1" shape-rendering="crispEdges"/><rect x="228.5" y="288" width="12" height="16" fill="#fff"/><rect x="242" y="296" width="1" height="1" fill="#7c7c7c"/><polyline points="230.5,293.5 234.5,297.5 238.5,293.5" fill="none" stroke="#3c3c3c" stroke-width="1.6"/><line x1="253.5" y1="312" x2="253.5" y2="344" stroke="#7c7c7c" stroke-dasharray="1 1" shape-rendering="crispEdges"/><line x1="253.5" y1="304" x2="253.5" y2="312" stroke="#7c7c7c" stroke-dasharray="1 1" shape-rendering="crispEdges"/><rect x="247.5" y="304" width="12" height="16" fill="#fff"/><rect x="261" y="312" width="1" height="1" fill="#7c7c7c"/><polyline points="249.5,309.5 253.5,313.5 257.5,309.5" fill="none" stroke="#3c3c3c" stroke-width="1.6"/><line x1="272.5" y1="320" x2="272.5" y2="328" stroke="#7c7c7c" stroke-dasharray="1 1" shape-rendering="crispEdges"/><line x1="272.5" y1="328.5" x2="282" y2="328.5" stroke="#7c7c7c" stroke-dasharray="1 1" shape-rendering="crispEdges"/><line x1="253.5" y1="344" x2="253.5" y2="440" stroke="#7c7c7c" stroke-dasharray="1 1" shape-rendering="crispEdges"/><rect x="247.5" y="336" width="12" height="16" fill="#fff"/><rect x="261" y="344" width="1" height="1" fill="#7c7c7c"/><polyline points="249.5,341.5 253.5,345.5 257.5,341.5" fill="none" stroke="#3c3c3c" stroke-width="1.6"/><line x1="272.5" y1="360" x2="272.5" y2="376" stroke="#7c7c7c" stroke-dasharray="1 1" shape-rendering="crispEdges"/><line x1="272.5" y1="352" x2="272.5" y2="360" stroke="#7c7c7c" stroke-dasharray="1 1" shape-rendering="crispEdges"/><line x1="272.5" y1="360.5" x2="282" y2="360.5" stroke="#7c7c7c" stroke-dasharray="1 1" shape-rendering="crispEdges"/><line x1="272.5" y1="376" x2="272.5" y2="392" stroke="#7c7c7c" stroke-dasharray="1 1" shape-rendering="crispEdges"/><line x1="272.5" y1="376.5" x2="282" y2="376.5" stroke="#7c7c7c" stroke-dasharray="1 1" shape-rendering="crispEdges"/><line x1="272.5" y1="392" x2="272.5" y2="408" stroke="#7c7c7c" stroke-dasharray="1 1" shape-rendering="crispEdges"/><line x1="272.5" y1="392.5" x2="282" y2="392.5" stroke="#7c7c7c" stroke-dasharray="1 1" shape-rendering="crispEdges"/><line x1="272.5" y1="408" x2="272.5" y2="424" stroke="#7c7c7c" stroke-dasharray="1 1" shape-rendering="crispEdges"/><line x1="272.5" y1="408.5" x2="282" y2="408.5" stroke="#7c7c7c" stroke-dasharray="1 1" shape-rendering="crispEdges"/><line x1="272.5" y1="424.5" x2="282" y2="424.5" stroke="#7c7c7c" stroke-dasharray="1 1" shape-rendering="crispEdges"/><line x1="253.5" y1="440" x2="253.5" y2="456" stroke="#7c7c7c" stroke-dasharray="1 1" shape-rendering="crispEdges"/><line x1="253.5" y1="440.5" x2="263" y2="440.5" stroke="#7c7c7c" stroke-dasharray="1 1" shape-rendering="crispEdges"/><line x1="253.5" y1="456" x2="253.5" y2="472" stroke="#7c7c7c" stroke-dasharray="1 1" shape-rendering="crispEdges"/><line x1="253.5" y1="456.5" x2="263" y2="456.5" stroke="#7c7c7c" stroke-dasharray="1 1" shape-rendering="crispEdges"/><line x1="253.5" y1="472" x2="253.5" y2="488" stroke="#7c7c7c" stroke-dasharray="1 1" shape-rendering="crispEdges"/><line x1="253.5" y1="472.5" x2="263" y2="472.5" stroke="#7c7c7c" stroke-dasharray="1 1" shape-rendering="crispEdges"/><line x1="253.5" y1="488" x2="253.5" y2="536" stroke="#7c7c7c" stroke-dasharray="1 1" shape-rendering="crispEdges"/><rect x="247.5" y="480" width="12" height="16" fill="#fff"/><rect x="261" y="488" width="1" height="1" fill="#7c7c7c"/><polyline points="249.5,485.5 253.5,489.5 257.5,485.5" fill="none" stroke="#3c3c3c" stroke-width="1.6"/><line x1="272.5" y1="504" x2="272.5" y2="520" stroke="#7c7c7c" stroke-dasharray="1 1" shape-rendering="crispEdges"/><line x1="272.5" y1="496" x2="272.5" y2="504" stroke="#7c7c7c" stroke-dasharray="1 1" shape-rendering="crispEdges"/><line x1="272.5" y1="504.5" x2="282" y2="504.5" stroke="#7c7c7c" stroke-dasharray="1 1" shape-rendering="crispEdges"/><line x1="272.5" y1="520.5" x2="282" y2="520.5" stroke="#7c7c7c" stroke-dasharray="1 1" shape-rendering="crispEdges"/><rect x="247.5" y="528" width="12" height="16" fill="#fff"/><rect x="261" y="536" width="1" height="1" fill="#7c7c7c"/><polyline points="249.5,533.5 253.5,537.5 257.5,533.5" fill="none" stroke="#3c3c3c" stroke-width="1.6"/><line x1="272.5" y1="552" x2="272.5" y2="568" stroke="#7c7c7c" stroke-dasharray="1 1" shape-rendering="crispEdges"/><line x1="272.5" y1="544" x2="272.5" y2="552" stroke="#7c7c7c" stroke-dasharray="1 1" shape-rendering="crispEdges"/><line x1="272.5" y1="552.5" x2="282" y2="552.5" stroke="#7c7c7c" stroke-dasharray="1 1" shape-rendering="crispEdges"/><line x1="272.5" y1="568" x2="272.5" y2="584" stroke="#7c7c7c" stroke-dasharray="1 1" shape-rendering="crispEdges"/><line x1="272.5" y1="568.5" x2="282" y2="568.5" stroke="#7c7c7c" stroke-dasharray="1 1" shape-rendering="crispEdges"/><line x1="272.5" y1="584" x2="272.5" y2="600" stroke="#7c7c7c" stroke-dasharray="1 1" shape-rendering="crispEdges"/><line x1="272.5" y1="584.5" x2="282" y2="584.5" stroke="#7c7c7c" stroke-dasharray="1 1" shape-rendering="crispEdges"/><line x1="272.5" y1="600.5" x2="282" y2="600.5" stroke="#7c7c7c" stroke-dasharray="1 1" shape-rendering="crispEdges"/><line x1="234.5" y1="616" x2="234.5" y2="660" stroke="#7c7c7c" stroke-dasharray="1 1" shape-rendering="crispEdges"/><rect x="228.5" y="608" width="12" height="16" fill="#fff"/><rect x="242" y="616" width="1" height="1" fill="#7c7c7c"/><polyline points="230.5,613.5 234.5,617.5 238.5,613.5" fill="none" stroke="#3c3c3c" stroke-width="1.6"/><line x1="253.5" y1="632" x2="253.5" y2="648" stroke="#7c7c7c" stroke-dasharray="1 1" shape-rendering="crispEdges"/><line x1="253.5" y1="624" x2="253.5" y2="632" stroke="#7c7c7c" stroke-dasharray="1 1" shape-rendering="crispEdges"/><rect x="247.5" y="624" width="12" height="16" fill="#fff"/><rect x="261" y="632" width="1" height="1" fill="#7c7c7c"/><polyline points="251.5,628 255.5,632 251.5,636" fill="none" stroke="#a6a6a6" stroke-width="1.6"/><line x1="253.5" y1="648" x2="253.5" y2="660" stroke="#7c7c7c" stroke-dasharray="1 1" shape-rendering="crispEdges"/><rect x="247.5" y="640" width="12" height="16" fill="#fff"/><rect x="261" y="648" width="1" height="1" fill="#7c7c7c"/><polyline points="251.5,644 255.5,648 251.5,652" fill="none" stroke="#a6a6a6" stroke-width="1.6"/></svg>
<div class="t tri" style="left:25px;top:4px">Компоненты</div>
<div class="t tri" style="left:25px;top:20px">Библиотека</div>
<div class="t tri" style="left:44px;top:36px">Библиотека в виде дерева</div>
<div class="t tri" style="left:44px;top:52px">Быстрый поиск</div>
<div class="t tri" style="left:44px;top:68px">Список альбомов</div>
<div class="t tri" style="left:44px;top:84px">Список альбомов (CUI)</div>
<div class="t tri" style="left:44px;top:100px">Фасетная классификация</div>
<div class="t tri" style="left:25px;top:116px">Внешний вид</div>
<div class="t tri" style="left:44px;top:132px">Вид плейлиста (модуль)</div>
<div class="t tri" style="left:63px;top:148px">Группировка</div>
<div class="t tri" style="left:44px;top:164px">Интерфейс Columns</div>
<div class="t tri" style="left:63px;top:180px">Переключение плейлистов</div>
<div class="ab" style="left:61px;top:193px;width:88px;height:16px;background:#cce8ff"></div>
<div class="t tri" style="left:63px;top:196px">Плейлист (NGP)</div>
<div class="t tri" style="left:63px;top:212px">Тема</div>
<div class="t tri" style="left:63px;top:228px">Фильтры</div>
<div class="t tri" style="left:63px;top:244px">Цвета и шрифты</div>
<div class="t tri" style="left:44px;top:260px">Контекстное меню</div>
<div class="t tri" style="left:44px;top:276px">Область уведомлений (UI Hacks)</div>
<div class="t tri" style="left:44px;top:292px">Основное окно (UI Hacks)</div>
<div class="t tri" style="left:44px;top:308px">Расширения Columns</div>
<div class="t tri" style="left:63px;top:324px">Выпадающие плейлисты</div>
<div class="t tri" style="left:63px;top:340px">Панель Проводника</div>
<div class="t tri" style="left:44px;top:356px">Стандартный интерфейс</div>
<div class="t tri" style="left:63px;top:372px">Вид плейлиста</div>
<div class="t tri" style="left:63px;top:388px">Фон и уведомления</div>
<div class="t tri" style="left:63px;top:404px">Цвета и шрифты</div>
<div class="t tri" style="left:63px;top:420px">Дополнительно (UI Hacks)</div>
<div class="t tri" style="left:25px;top:436px">Воспроизведение</div>
<div class="t tri" style="left:44px;top:452px">Вывод</div>
<div class="t tri" style="left:44px;top:468px">Декодирование</div>
</div>
<div class="ab" style="left:421px;top:175px;width:17px;height:482px;background:#f0f0f0"></div>
<div class="ab" style="left:422px;top:193px;width:15px;height:256px;background:#cdcdcd"></div>
<svg class="ab" style="left:421.5px;top:177px" width="16" height="16" viewBox="421.5 177 16 16"><polyline points="425.5,187.0 429.5,183.0 433.5,187.0" fill="none" stroke="#606060" stroke-width="1.9"/></svg>
<svg class="ab" style="left:421.5px;top:639px" width="16" height="16" viewBox="421.5 639 16 16"><polyline points="425.5,645.0 429.5,649.0 433.5,645.0" fill="none" stroke="#606060" stroke-width="1.9"/></svg>
<div class="ab" style="left:221px;top:657px;width:217px;height:17px;background:#f0f0f0"></div>
<div class="ab" style="left:239px;top:658px;width:137px;height:14px;background:#cdcdcd"></div>
<svg class="ab" style="left:222px;top:657px" width="16" height="16" viewBox="222 657 16 16"><polyline points="232.0,661 228.0,665 232.0,669" fill="none" stroke="#606060" stroke-width="1.9"/></svg>
<svg class="ab" style="left:5px;top:655.5px" width="16" height="16" viewBox="5 655.5 16 16"><polyline points="15.0,659.5 11.0,663.5 15.0,667.5" fill="none" stroke="#606060" stroke-width="1.9"/></svg>
<svg class="ab" style="left:404px;top:657px" width="16" height="16" viewBox="404 657 16 16"><polyline points="410.0,661 414.0,665 410.0,669" fill="none" stroke="#606060" stroke-width="1.9"/></svg>
<div class="ab" style="left:448px;top:194px;width:499px;height:444px;background:#fff;border:1px solid #d9d9d9"></div>
<div class="ab" style="left:450px;top:176px;width:47px;height:19px;background:#f0f0f0;border:1px solid #d9d9d9;border-bottom:none"></div>
<div class="t dlg" style="left:456px;top:181px">Общие</div>
<div class="ab" style="left:496px;top:176px;width:60px;height:19px;background:#f0f0f0;border:1px solid #d9d9d9;border-bottom:none"></div>
<div class="t dlg" style="left:502px;top:181px">Обложка</div>
<div class="ab" style="left:555px;top:176px;width:84px;height:19px;background:#f0f0f0;border:1px solid #d9d9d9;border-bottom:none"></div>
<div class="t dlg" style="left:561px;top:181px">Группировать</div>
<div class="ab" style="left:697px;top:176px;width:70px;height:19px;background:#f0f0f0;border:1px solid #d9d9d9;border-bottom:none"></div>
<div class="t dlg" style="left:703px;top:181px">Глобальные</div>
<div class="ab" style="left:638px;top:174px;width:60px;height:21px;background:#fff;border:1px solid #d9d9d9;border-bottom:none"></div>
<div class="t dlg" style="left:645px;top:179px">Столбцы</div>
<div class="t" style="left:463px;top:207px;font-size:15.6px;color:#000">Столбцы</div>
<div class="ab" style="left:463px;top:245px;width:119px;height:349px;background:#fff;border:1px solid #828790"></div>
<div class="ab" style="left:464px;top:246px;width:100px;height:347px;overflow:hidden">
<div class="t dlg" style="left:7px;top:5px">...</div>
<div class="t dlg" style="left:7px;top:22px">Индекс</div>
<div class="ab" style="left:1px;top:35px;width:97px;height:17px;background:#d9d9d9"></div>
<div class="t dlg" style="left:7px;top:39px">Track Number</div>
<div class="t dlg" style="left:7px;top:56px">№</div>
<div class="t dlg" style="left:7px;top:73px">Исполнитель</div>
<div class="t dlg" style="left:7px;top:90px">Название</div>
<div class="t dlg" style="left:7px;top:107px">Исполнитель а...</div>
<div class="t dlg" style="left:7px;top:124px">Альбом</div>
<div class="t dlg" style="left:7px;top:141px">Битрейт</div>
<div class="t dlg" style="left:7px;top:158px">Длина</div>
<div class="t dlg" style="left:7px;top:175px">Рейтинг</div>
<div class="t dlg" style="left:7px;top:192px">Жанр</div>
<div class="t dlg" style="left:7px;top:209px">Дата</div>
<div class="t dlg" style="left:7px;top:226px">Размер файла</div>
<div class="t dlg" style="left:7px;top:243px">Частота</div>
<div class="t dlg" style="left:7px;top:260px">Усиление трека</div>
<div class="t dlg" style="left:7px;top:277px">Каналы</div>
<div class="t dlg" style="left:7px;top:294px">Режим стерео</div>
<div class="t dlg" style="left:7px;top:311px">Воспроизведено</div>
<div class="t dlg" style="left:7px;top:328px">DR (T)</div>
<div class="t dlg" style="left:7px;top:345px">DR (A)</div>
</div>
<div class="ab" style="left:564px;top:246px;width:17px;height:347px;background:#f0f0f0"></div>
<div class="ab" style="left:565px;top:264px;width:15px;height:259px;background:#cdcdcd"></div>
<svg class="ab" style="left:563.5px;top:248px" width="16" height="16" viewBox="563.5 248 16 16"><polyline points="567.5,258.0 571.5,254.0 575.5,258.0" fill="none" stroke="#606060" stroke-width="1.9"/></svg>
<svg class="ab" style="left:563.5px;top:576px" width="16" height="16" viewBox="563.5 576 16 16"><polyline points="567.5,582.0 571.5,586.0 575.5,582.0" fill="none" stroke="#606060" stroke-width="1.9"/></svg>
<div class="ab" style="left:592px;top:264px;width:340px;height:329px;background:#fff;border:1px solid #d9d9d9"></div>
<div class="ab" style="left:594px;top:247px;width:66px;height:18px;background:#f0f0f0;border:1px solid #d9d9d9;border-bottom:none"></div>
<div class="t dlg" style="left:600px;top:252px">Настройки</div>
<div class="ab" style="left:743px;top:247px;width:40px;height:18px;background:#f0f0f0;border:1px solid #d9d9d9;border-bottom:none"></div>
<div class="t dlg" style="left:749px;top:252px">Стиль</div>
<div class="ab" style="left:782px;top:247px;width:72px;height:18px;background:#f0f0f0;border:1px solid #d9d9d9;border-bottom:none"></div>
<div class="t dlg" style="left:788px;top:252px">Сортировка</div>
<div class="ab" style="left:659px;top:245px;width:85px;height:20px;background:#fff;border:1px solid #d9d9d9;border-bottom:none"></div>
<div class="t dlg" style="left:666px;top:249.5px">Отображение</div>
<div class="ab" style="left:608px;top:278px;width:313px;height:276px;background:#fff;border:1px solid #828790"></div>
<div class="t" style="left:614px;top:282px;font-size:12px;color:#000;line-height:14.5px">$if($directory(%path%) IS $directory(%path%),$num
(%list_index%,2))</div>
<div class="ab" style="left:903px;top:279px;width:17px;height:274px;background:#f0f0f0"></div>
<svg class="ab" style="left:902.5px;top:281px" width="16" height="16" viewBox="902.5 281 16 16"><polyline points="906.5,291.0 910.5,287.0 914.5,291.0" fill="none" stroke="#b4b4b4" stroke-width="1.9"/></svg>
<svg class="ab" style="left:902.5px;top:536px" width="16" height="16" viewBox="902.5 536 16 16"><polyline points="906.5,542.0 910.5,546.0 914.5,542.0" fill="none" stroke="#b4b4b4" stroke-width="1.9"/></svg>
<div class="ab" style="left:697px;top:561px;width:111px;height:21px;background:#fff;border:1px solid #7a7a7a"></div>
<div class="t dlg" style="left:700px;top:566px">$rgb(0,0,0)</div>
<div class="btn" style="left:812px;top:562px;width:18px;height:19px;line-height:17px">...</div>
<div class="btn" style="left:836px;top:562px;width:84px;height:19px;line-height:17px">Инструменты</div>
<div class="btn" style="left:464px;top:605px;width:73px;height:21px;line-height:19px">Новый</div>
<div class="btn" style="left:543px;top:605px;width:73px;height:21px;line-height:19px">Вверх</div>
<div class="btn" style="left:623px;top:605px;width:73px;height:21px;line-height:19px">Вниз</div>
<div class="btn" style="left:858px;top:605px;width:73px;height:21px;line-height:19px">Применить</div>
<div class="btn" style="left:449px;top:649px;width:85px;height:23px;line-height:21px">Сбросить все</div>
<div class="btn" style="left:542px;top:649px;width:157px;height:23px;line-height:21px;background:#cccccc;border-color:#bfbfbf;color:#838383">Сбросить для этой страницы</div>
<div class="btn" style="left:719px;top:649px;width:70px;height:23px;line-height:19px;border:2px solid #0078d7">OK</div>
<div class="btn" style="left:797px;top:649px;width:70px;height:23px;line-height:21px">Отмена</div>
<div class="btn" style="left:875px;top:649px;width:70px;height:23px;line-height:21px;background:#cccccc;border-color:#bfbfbf;color:#838383">Применить</div>
</body></html>
